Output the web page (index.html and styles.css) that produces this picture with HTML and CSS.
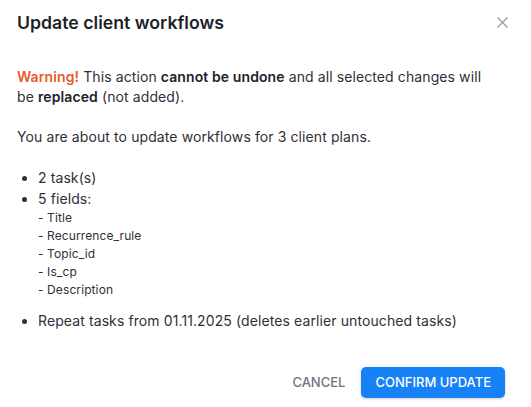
FILE: index.html
```html
<!DOCTYPE html>
<html lang="en">

<head>
    <meta charset="UTF-8">
    <meta name="viewport" content="width=device-width, initial-scale=1.0">
    <title>Update client workflows</title>
    <link rel="stylesheet" href="styles.css">
</head>

<body>
    <div class="dialog">
        <div class="dialog-header">
            <h2 class="dialog-title">Update client workflows</h2>
            <button class="close-btn" aria-label="Close">
                <svg width="11" height="11" viewBox="0 0 11 11">
                    <path d="M0.5 0.5 L10.5 10.5 M10.5 0.5 L0.5 10.5" stroke="#9c9c9c" stroke-width="1.4" fill="none" />
                </svg>
            </button>
        </div>

        <div class="dialog-content">
            <p>
                <span class="warning">Warning!</span> This action <strong>cannot be undone</strong> and all selected changes will
                be <strong>replaced</strong> (not added).
            </p>
            <p>You are about to update workflows for 3 client plans.</p>
            <ul class="summary">
                <li>2 task(s)</li>
                <li>5 fields:
                    <div class="field-list">
                        <div>- Title</div>
                        <div>- Recurrence_rule</div>
                        <div>- Topic_id</div>
                        <div>- Is_cp</div>
                        <div>- Description</div>
                    </div>
                </li>
                <li>Repeat tasks from 01.11.2025 (deletes earlier untouched tasks)</li>
            </ul>
        </div>

        <div class="dialog-actions">
            <button class="btn btn-text">Cancel</button>
            <button class="btn btn-primary">Confirm update</button>
        </div>
    </div>
</body>

</html>
```

FILE: styles.css
```css
body {
    margin: 0;
    background-color: #fff;
    font-family: Inter, "Noto Sans", sans-serif;
    color: #2f2f39;
}

.dialog {
    width: 531px;
    height: 407px;
    box-sizing: border-box;
}

.dialog-header {
    display: flex;
    justify-content: space-between;
    align-items: center;
    padding: 9px 23px 0 17px;
}

.dialog-title {
    margin: 0;
    font-size: 17.7px;
    line-height: 27px;
    font-weight: 600;
    color: #1f1f2a;
}

.close-btn {
    border: none;
    background: none;
    padding: 0;
    display: flex;
    cursor: pointer;
}

.dialog-content {
    padding: 31px 36px 0 17px;
    font-size: 14px;
    line-height: 20px;
    letter-spacing: 0.1px;
}

.dialog-content p {
    margin: 0 0 20px;
}

.warning {
    color: #e85a2c;
    font-weight: 600;
}

strong {
    font-weight: 600;
    color: #22222c;
}

.summary {
    margin: 0;
    padding-left: 21px;
    line-height: 21px;
}

.field-list {
    font-size: 12px;
    line-height: 18px;
    margin-bottom: 11px;
}

.dialog-actions {
    display: flex;
    justify-content: flex-end;
    gap: 8px;
    padding: 36px 26px 0;
}

.btn {
    font-family: Inter, "Noto Sans", sans-serif;
    font-size: 13px;
    font-weight: 500;
    line-height: 19px;
    text-transform: uppercase;
    border: none;
    border-radius: 5px;
    cursor: pointer;
}

.btn-text {
    padding: 6px 8px;
    background: none;
    color: #6f7380;
}

.btn-primary {
    padding: 6px 14px;
    background-color: #1781f6;
    color: #fff;
    box-shadow: 0 1px 3px rgba(0, 0, 0, 0.2);
}
```
